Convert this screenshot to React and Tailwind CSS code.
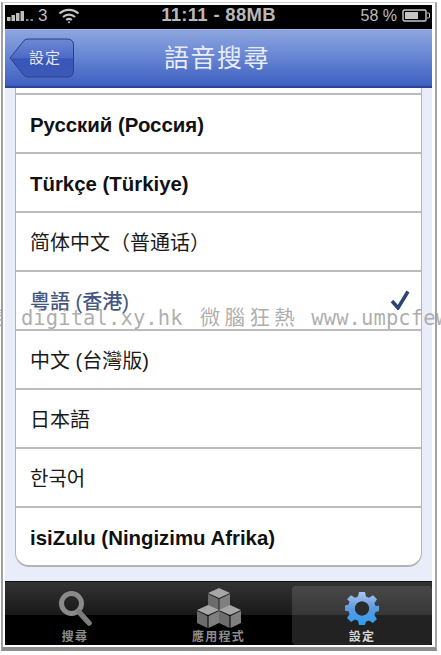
import React from 'react'

const CJK = '"Liberation Sans", "Noto Sans CJK TC", sans-serif'

const rows = [
  { label: 'Русский (Россия)', bold: true },
  { label: 'Türkçe (Türkiye)', bold: true },
  { label: '简体中文（普通话）', lang: 'zh-Hans' },
  { label: '粵語 (香港)', selected: true },
  { label: '中文 (台灣版)' },
  { label: '日本語' },
  { label: '한국어' },
  { label: 'isiZulu (Ningizimu Afrika)', bold: true },
]

const SignalBars = () => (
  <svg width="27" height="12" viewBox="0 0 27 12" fill="#bdbdbd">
    <rect x="0" y="7" width="3.5" height="4" />
    <rect x="4.5" y="5" width="3.5" height="6" />
    <rect x="9" y="3" width="3.5" height="8" />
    <rect x="13.5" y="1" width="3.5" height="10" />
    <rect x="19" y="9" width="2.5" height="2" opacity="0.7" />
    <rect x="23.5" y="9" width="2.5" height="2" opacity="0.7" />
  </svg>
)

const Wifi = () => (
  <svg width="22" height="16" viewBox="0 0 22 16" fill="none" stroke="#c4c4c4" strokeWidth="2.2">
    <path d="M1.5 5.5a14 14 0 0 1 19 0" />
    <path d="M5 9a9 9 0 0 1 12 0" />
    <path d="M8.2 12a4.5 4.5 0 0 1 5.6 0" />
    <circle cx="11" cy="14.3" r="1" fill="#c4c4c4" stroke="none" />
  </svg>
)

const Battery = () => (
  <svg width="28" height="13" viewBox="0 0 28 13" fill="none">
    <rect x="1" y="1" width="23" height="11" rx="1.5" stroke="#c8c8c8" strokeWidth="1.4" />
    <rect x="3" y="3" width="13" height="7" fill="#c4c4c4" />
    <path d="M25 4h1.5a1 1 0 0 1 1 1v3a1 1 0 0 1-1 1H25" stroke="#c8c8c8" strokeWidth="1" />
  </svg>
)

const BackShape = () => (
  <svg className="absolute inset-0" width="66" height="40" viewBox="0 0 66 40">
    <defs>
      <linearGradient id="back" x1="0" y1="0" x2="0" y2="1">
        <stop offset="0" stopColor="#7088d4" />
        <stop offset="0.5" stopColor="#4c69c6" />
        <stop offset="0.52" stopColor="#3955b6" />
        <stop offset="1" stopColor="#3d59ba" />
      </linearGradient>
    </defs>
    <path
      d="M1 20 15 2.5Q16.5 1 19 1H58Q64.5 1 64.5 7V33Q64.5 39 58 39H19Q16.5 39 15 37.5Z"
      fill="url(#back)"
      stroke="#2b4088"
      strokeWidth="1"
    />
  </svg>
)

const SearchIcon = () => (
  <svg width="34" height="36" viewBox="0 0 34 36" fill="none">
    <circle cx="13.5" cy="13.5" r="10" stroke="#8a8a8a" strokeWidth="5" />
    <path d="M21 22 31 33" stroke="#7c7c7c" strokeWidth="5.5" strokeLinecap="round" />
  </svg>
)

// one isometric box, placed by offset
const Cube = ({ x, y }) => (
  <g transform={`translate(${x} ${y})`}>
    <path d="M11 0 22 5 11 10 0 5Z" fill="#a6a6a6" />
    <path d="M0 6 10.5 11V23L0 18Z" fill="#6c6c6c" />
    <path d="M22 6 11.5 11V23L22 18Z" fill="#7f7f7f" />
  </g>
)

const BoxesIcon = () => (
  <svg width="44" height="40" viewBox="0 0 44 40">
    <Cube x={11} y={0} />
    <Cube x={0} y={17} />
    <Cube x={22} y={17} />
  </svg>
)

const GearIcon = () => (
  <svg width="34" height="34" viewBox="0 0 34 34">
    <defs>
      <linearGradient id="gear" x1="0" y1="0" x2="0" y2="1">
        <stop offset="0" stopColor="#a9c6ec" />
        <stop offset="0.5" stopColor="#5c9ae0" />
        <stop offset="1" stopColor="#2f9cf0" />
      </linearGradient>
    </defs>
    <path
      fillRule="evenodd"
      fill="url(#gear)"
      d="M14 1h6l1 4.5 3 1.3L28 4.3l4 4-2.600 4 1.300 3L34 14.500v5.500l-3.400 1-1.300 3 2.600 4-4 4-4-2.600-3 1.300L20 34h-6l-1-4.300-3-1.300-4 2.600-4-4 2.600-4-1.300-3L0 20v-5.500l3.300-.7 1.300-3L2 8.300l4-4 4 2.500 3-1.300ZM17 10.500a7 7 0 1 0 0 14 7 7 0 0 0 0-14Z"
    />
    <circle cx="17" cy="17.5" r="7" fill="#2b2b2b" />
  </svg>
)

const Tab = ({ icon, label, active, className }) => (
  <div className={`flex flex-col items-center justify-end ${className}`}>
    <div className="flex h-[40px] items-center justify-center pb-[3px]">{icon}</div>
    <span className={`text-[12px] leading-[16px] font-bold tracking-[1.300px] ${active ? 'text-[#d8d8d8]' : 'text-[#8c8c8c]'}`}>{label}</span>
  </div>
)

export default function App() {
  return (
    <div className="relative h-[655px] w-[441px] overflow-hidden bg-white" style={{ fontFamily: CJK }}>
      {/* photo frame */}
      <div className="ml-[1px] mt-[2px] h-[649px] w-[436px] border-b-[4px] border-l-[2px] border-r-[2px] border-t border-b-[#8d8d8d] border-l-[#a0a0a0] border-r-[#a3a3a3] border-t-[#cfcfcf] pl-[2px] pr-[1px] pt-[2px]">
        <div className="flex h-[640px] w-[427px] flex-col">
          {/* status bar */}
          <div className="flex h-[24px] shrink-0 items-center bg-black px-[2px] pb-[3px] text-[#bdbdbd]">
            <div className="flex flex-1 items-center">
              <SignalBars />
              <span className="ml-[4px] text-[17px] leading-none">3</span>
              <span className="ml-[11px]"><Wifi /></span>
            </div>
            <span className="text-[18.500px] font-bold leading-none tracking-[0.3px] text-[#b8b8b8]">11:11 - 88MB</span>
            <div className="flex flex-1 items-center justify-end gap-[5px]">
              <span className="text-[16px] leading-none">58 %</span>
              <Battery />
            </div>
          </div>

          {/* nav bar */}
          <div className="flex h-[59px] shrink-0 items-center border-b-2 border-b-[#2c4491] border-t border-t-[#9fb4e6] bg-gradient-to-b from-[#8ea6e0] to-[#3e5fc0] pl-[4px]">
            <div className="relative flex h-[40px] w-[66px] shrink-0 items-center justify-center pl-[6px] text-[15px] tracking-[1px] text-[#e4e8f5]">
              <BackShape />
              <span className="relative">設定</span>
            </div>
            <h1 className="ml-[89px] text-[25px] leading-none tracking-[1.500px] text-[#e8ecf8]">語音搜尋</h1>
          </div>

          {/* list */}
          <div className="flex-1 overflow-hidden bg-[#e9edf9] px-[10px]">
            <div className="rounded-b-[14px] border-x border-b-2 border-[#b4b4b4] bg-white pt-[5px]">
              {rows.map((row) => (
                <div
                  key={row.label}
                  lang={row.lang}
                  className={`flex h-[59px] items-center justify-between border-t-2 border-[#bcbcbc] pl-[14px] pr-[11px] pt-[3px] ${
                    row.selected ? 'font-medium text-[#44567f]' : 'text-[#1a1a1a]'
                  } ${row.bold ? 'text-[20.400px] font-bold text-[#111]' : 'text-[20px]'}`}
                >
                  <span>{row.label}</span>
                  {row.selected && (
                    <svg className="mb-[5px]" width="20" height="20" viewBox="0 0 20 20" fill="none">
                      <path d="M2 11l6 7L18 1.5" stroke="#2f4274" strokeWidth="3.5" />
                    </svg>
                  )}
                </div>
              ))}
            </div>
          </div>

          {/* tab bar */}
          <div className="relative flex h-[64px] shrink-0 border-t border-t-[#111] bg-[linear-gradient(to_bottom,#333_0%,#191919_52%,#000_52%,#000_100%)] pt-[4px]">
            <Tab className="w-[140px]" icon={<SearchIcon />} label="搜尋" />
            <Tab className="w-[147px]" icon={<BoxesIcon />} label="應用程式" />
            <Tab
              active
              className="flex-1 rounded-[4px] bg-[linear-gradient(to_bottom,#484848_0%,#363636_50%,#222_50%,#222_100%)]"
              icon={<GearIcon />}
              label="設定"
            />
          </div>
        </div>
      </div>

      {/* watermark over the photo */}
      <div
        className="pointer-events-none absolute left-[-18px] top-[304px] whitespace-nowrap text-[20.500px] leading-[28px] tracking-[0.100px] text-[#a0a0a0]/85"
        style={{ fontFamily: '"DejaVu Sans Mono", "Noto Sans CJK TC", monospace' }}
      >
        <span className="tracking-[3.400px]">樣</span>
        <span className="ml-[15px]">digital.xy.hk</span>
        <span className="ml-[17px] tracking-[4.400px]">微腦狂熱</span>
        <span className="ml-[12px]">www.umpcfew</span>
      </div>
    </div>
  )
}
